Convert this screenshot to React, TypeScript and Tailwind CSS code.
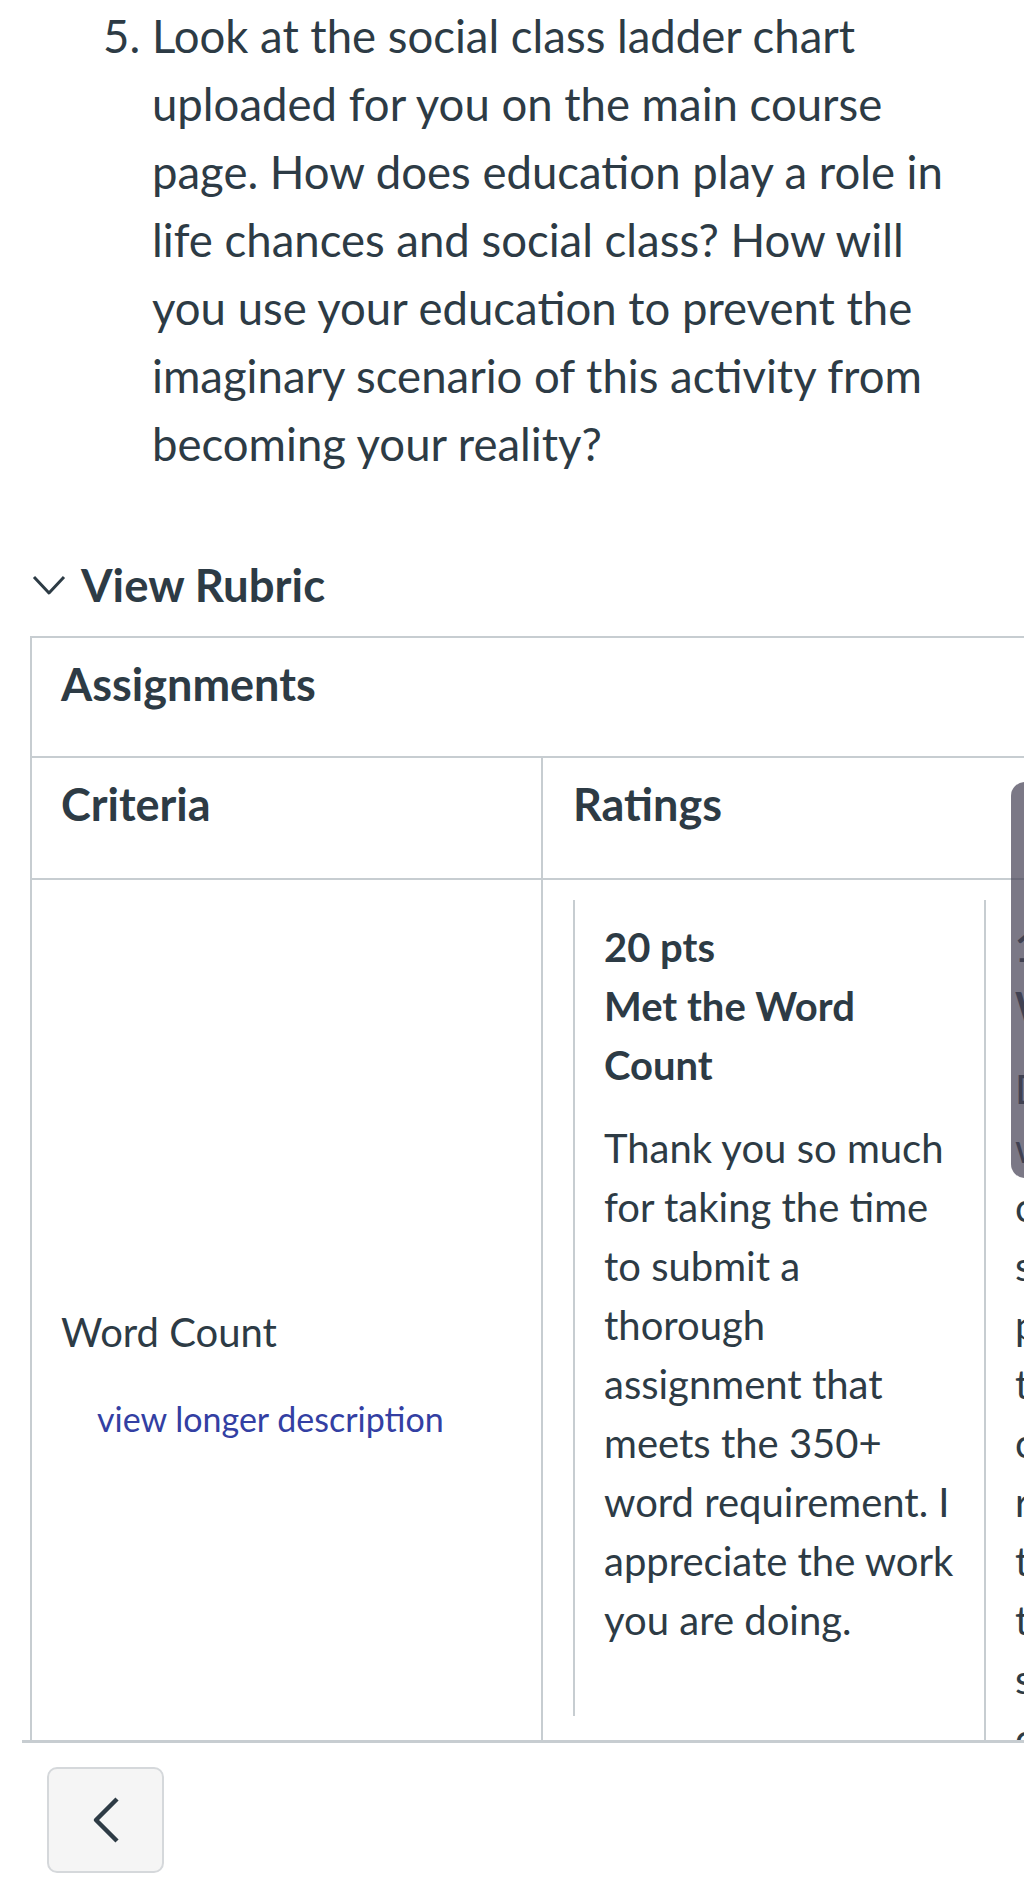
import React from "react";

const tierTwoLines = [
  "Did not meet the",
  "word count. Please",
  "continue to",
  "submit thorough",
  "posts that",
  "thoughtfully",
  "consider the",
  "reading and",
  "tie it to",
  "the questions",
  "so that you",
  "can earn full points.",
];

const App = () => {
  return (
    <div className="relative w-[1024px] h-[1887px] overflow-hidden bg-white text-[#2d3b45] font-[Lato,sans-serif]">
      {/* question */}
      <div className="flex pl-[103px] pt-[2px] text-[45.5px] leading-[68px]">
        <span className="w-[49px] shrink-0">5.</span>
        <p className="w-[815px]">
          Look at the social class ladder chart uploaded for you on the main course page. How does
          education play a role in life chances and social class? How will you use your education to
          prevent the imaginary scenario of this activity from becoming your reality?
        </p>
      </div>

      {/* rubric toggle */}
      <div className="mt-[77px] flex items-center pl-[32px] h-[60px]">
        <svg width="34" height="22" viewBox="0 0 34 22" fill="none">
          <polyline points="2,3 17,19 32,3" stroke="#2d3b45" strokeWidth="3" strokeLinejoin="round" />
        </svg>
        <span className="ml-[15px] text-[45.5px] leading-[60px] font-bold">View Rubric</span>
      </div>

      {/* rubric table */}
      <div className="mt-[21px] ml-[22px] h-[1107px] overflow-hidden border-b-[3px] border-[#c7cdd1]">
        <div className="ml-[8px] w-[1300px] border-l-2 border-t-2 border-[#c7cdd1]">
          <div className="h-[120px] border-b-2 border-[#c7cdd1] pl-[29px] pt-[16px] text-[45px] leading-[60px] font-bold">
            Assignments
          </div>
          <div className="flex h-[122px] border-b-2 border-[#c7cdd1] text-[45px] leading-[60px] font-bold">
            <div className="w-[511px] shrink-0 border-r-2 border-[#c7cdd1] pl-[29px] pt-[16px]">Criteria</div>
            <div className="pl-[30px] pt-[16px]">Ratings</div>
          </div>
          <div className="flex h-[900px]">
            <div className="w-[511px] shrink-0 border-r-2 border-[#c7cdd1] pl-[29px] pt-[422px]">
              <p className="text-[40px] leading-[60px]">Word Count</p>
              <p className="mt-[35px] ml-[36px] text-[34px] leading-[44px] text-[#333fa3]">
                view longer description
              </p>
            </div>
            <div className="flex pl-[30px] pt-[20px] text-[40px] leading-[59px]">
              <div className="w-[411px] shrink-0 h-[816px] border-l-2 border-[#c7cdd1] pl-[29px] pr-[22px] pt-[18px]">
                <p className="font-bold">20 pts</p>
                <p className="font-bold">Met the Word Count</p>
                <p className="mt-[24px]">
                  Thank you so much for taking the time to submit a thorough assignment that meets the
                  350+ word requirement. I appreciate the work you are doing.
                </p>
              </div>
              <div className="w-[411px] shrink-0 border-l-2 border-[#c7cdd1] pl-[29px] pt-[18px] whitespace-nowrap">
                <p className="font-bold">10 pts</p>
                <p className="font-bold">Word Count Not Met</p>
                <div className="mt-[24px]">
                  {tierTwoLines.map((line) => (
                    <p key={line}>{line}</p>
                  ))}
                </div>
              </div>
            </div>
          </div>
        </div>
      </div>

      {/* scroll hint over the next rating */}
      <div className="absolute left-[1011px] top-[782px] w-[40px] h-[396px] rounded-[14px] bg-[rgba(72,68,88,0.72)]" />

      {/* back button */}
      <button className="mt-[24px] ml-[47px] w-[117px] h-[106px] flex items-center justify-center rounded-[10px] border-2 border-[#d5d8db] bg-[#f5f5f5]">
        <svg width="30" height="48" viewBox="0 0 30 48" fill="none">
          <polyline points="26,3 5,24 26,45" stroke="#2d3b45" strokeWidth="4.5" strokeLinejoin="round" />
        </svg>
      </button>
    </div>
  );
};

export default App;
